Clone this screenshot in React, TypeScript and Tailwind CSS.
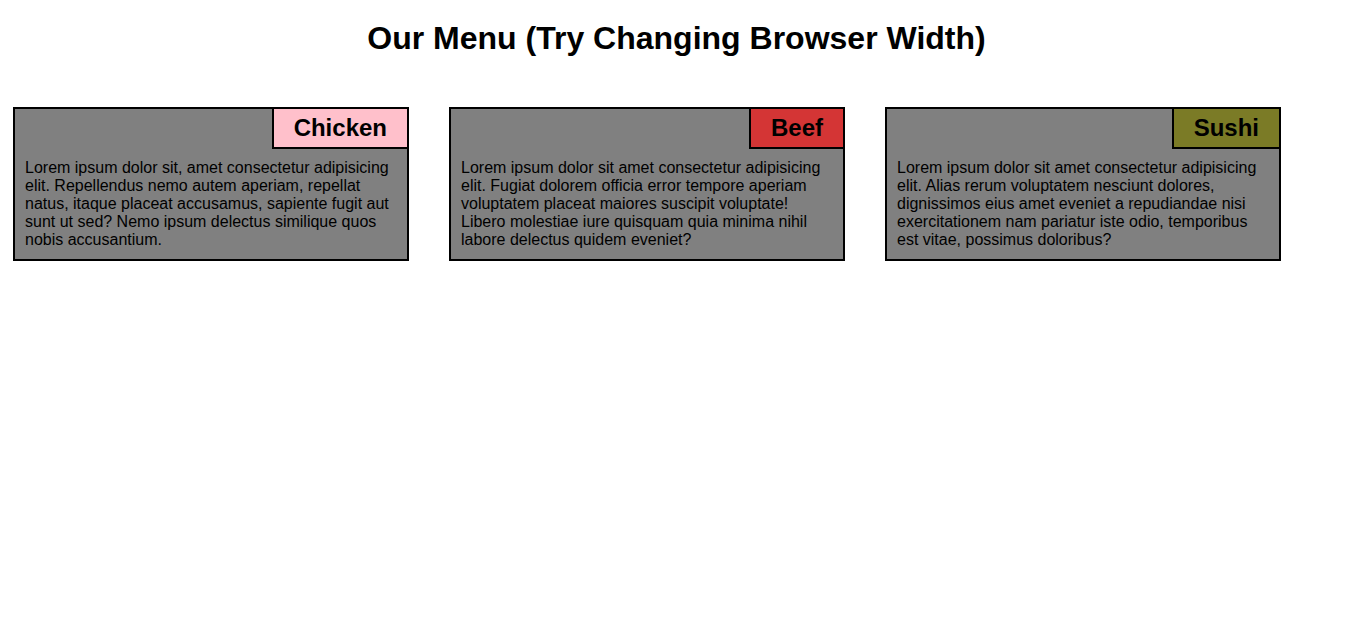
import React from "react";

type Item = {
  name: string;
  tag: string;
  text: string;
};

const items: Item[] = [
  {
    name: "Chicken",
    tag: "bg-[#ffc0cb]",
    text: "Lorem ipsum dolor sit, amet consectetur adipisicing elit. Repellendus nemo autem aperiam, repellat natus, itaque placeat accusamus, sapiente fugit aut sunt ut sed? Nemo ipsum delectus similique quos nobis accusantium.",
  },
  {
    name: "Beef",
    tag: "bg-[#d43535]",
    text: "Lorem ipsum dolor sit amet consectetur adipisicing elit. Fugiat dolorem officia error tempore aperiam voluptatem placeat maiores suscipit voluptate! Libero molestiae iure quisquam quia minima nihil labore delectus quidem eveniet?",
  },
  {
    name: "Sushi",
    tag: "bg-[#7b7b26]",
    text: "Lorem ipsum dolor sit amet consectetur adipisicing elit. Alias rerum voluptatem nesciunt dolores, dignissimos eius amet eveniet a repudiandae nisi exercitationem nam pariatur iste odio, temporibus est vitae, possimus doloribus?",
  },
];

const MenuCard = ({ item }: { item: Item }) => (
  <div className="w-[396px] border-2 border-black bg-[#808080]">
    <div className="flex justify-end">
      <div
        className={`h-[40px] px-[20px] border-l-2 border-b-2 border-black flex items-center text-[24px] font-bold text-black ${item.tag}`}
      >
        {item.name}
      </div>
    </div>
    <p className="mt-[10px] px-[10px] pb-[10px] text-[16px] leading-[18px] text-black">
      {item.text}
    </p>
  </div>
);

export default function App() {
  return (
    <div className="min-h-screen bg-white font-['Liberation_Sans',Arial,sans-serif]">
      <h1 className="pt-[20px] text-center text-[32px] leading-[37px] font-bold text-black">
        Our Menu (Try Changing Browser Width)
      </h1>
      <div className="mt-[50px] flex items-start gap-[40px] px-[13px]">
        {items.map((item) => (
          <MenuCard key={item.name} item={item} />
        ))}
      </div>
    </div>
  );
}
